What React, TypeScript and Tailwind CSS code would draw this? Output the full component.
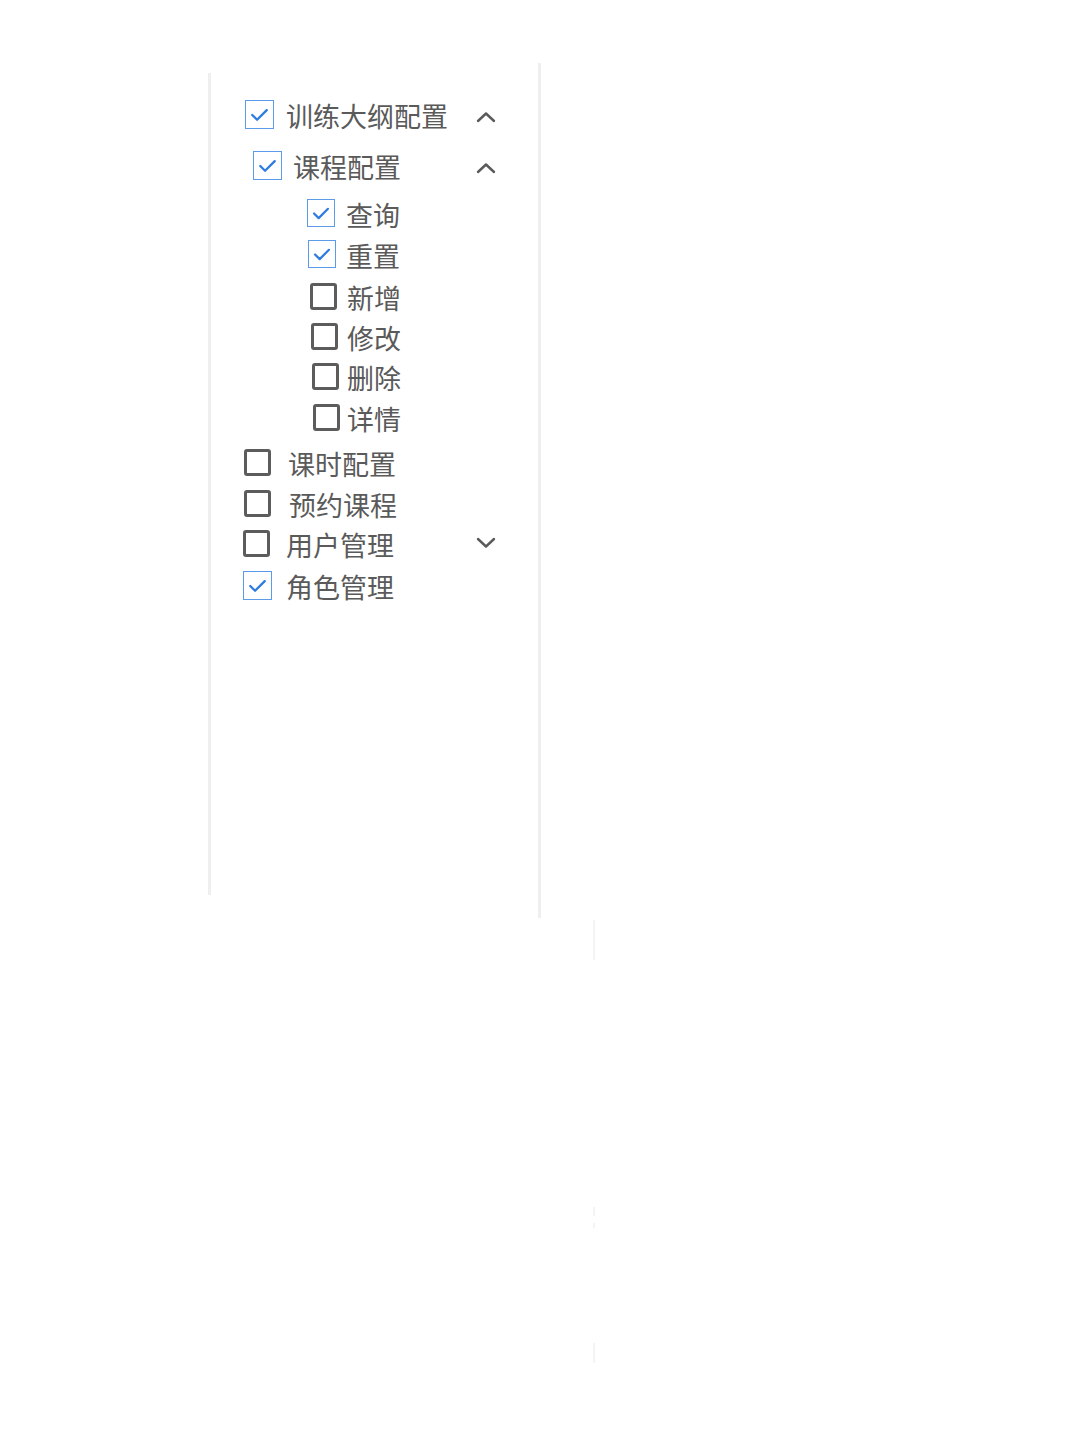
import React from "react";

function Checked({ size = "w-[29px] h-[29px]" }: { size?: string }) {
  return (
    <span className={`${size} shrink-0 border border-[#5b9bea] bg-white flex items-center justify-center`}>
      <svg viewBox="0 0 28 28" className="w-full h-full">
        <path d="M6.5 14.5 L11.5 19.5 L21.5 9.5" fill="none" stroke="#2f7ce0" strokeWidth="2.4" strokeLinecap="round" strokeLinejoin="round" />
      </svg>
    </span>
  );
}

function Unchecked() {
  return <span className="w-[27px] h-[27px] shrink-0 border-[3px] border-[#5c5c5c] rounded-[3px] bg-white" />;
}

function Chevron({ up }: { up: boolean }) {
  return (
    <svg viewBox="0 0 20 12" className={`w-[20px] h-[12px] ml-auto shrink-0 ${up ? "translate-y-[2px]" : ""}`}>
      <path
        d={up ? "M2 10 L10 2.5 L18 10" : "M2 2 L10 9.5 L18 2"}
        fill="none"
        stroke="#5a5a5a"
        strokeWidth="2.4"
        strokeLinecap="round"
        strokeLinejoin="round"
      />
    </svg>
  );
}

const label = "text-[27px] leading-none text-[#5a5a5a] whitespace-nowrap translate-y-[1px]";

export default function App() {
  return (
    <div className="min-h-[1443px] bg-white" style={{ fontFamily: '"Noto Sans CJK SC", "Noto Sans", sans-serif' }}>
      <div className="ml-[208px] pt-[63px]">
        <div className="w-[333px] h-[855px] pt-[10px] border-r-[3px] border-[#efefef]">
          <div className="h-[822px] border-l-[3px] border-[#efefef] pt-[27px] pr-[42px]">
            {/* 训练大纲配置 */}
            <div className="h-[29px] flex items-center pl-[34px]">
              <Checked />
              <span className={`${label} ml-[12px]`}>训练大纲配置</span>
              <Chevron up />
            </div>
            {/* 课程配置 */}
            <div className="h-[29px] mt-[22px] flex items-center pl-[42px]">
              <Checked />
              <span className={`${label} ml-[11px]`}>课程配置</span>
              <Chevron up />
            </div>
            {/* 课程配置 actions */}
            <div className="h-[28px] mt-[19px] flex items-center pl-[96px]">
              <Checked size="w-[28px] h-[28px]" />
              <span className={`${label} ml-[11px]`}>查询</span>
            </div>
            <div className="h-[28px] mt-[13px] flex items-center pl-[97px]">
              <Checked size="w-[28px] h-[28px]" />
              <span className={`${label} ml-[10px]`}>重置</span>
            </div>
            <div className="h-[28px] mt-[14px] flex items-center pl-[99px]">
              <Unchecked />
              <span className={`${label} ml-[10px]`}>新增</span>
            </div>
            <div className="h-[28px] mt-[12px] flex items-center pl-[100px]">
              <Unchecked />
              <span className={`${label} ml-[9px]`}>修改</span>
            </div>
            <div className="h-[28px] mt-[12px] flex items-center pl-[101px]">
              <Unchecked />
              <span className={`${label} ml-[8px]`}>删除</span>
            </div>
            <div className="h-[28px] mt-[13px] flex items-center pl-[102px]">
              <Unchecked />
              <span className={`${label} ml-[7px]`}>详情</span>
            </div>
            {/* top-level menus */}
            <div className="h-[28px] mt-[17px] flex items-center pl-[33px]">
              <Unchecked />
              <span className={`${label} ml-[17px]`}>课时配置</span>
            </div>
            <div className="h-[28px] mt-[13px] flex items-center pl-[33px]">
              <Unchecked />
              <span className={`${label} ml-[18px] text-[#4a4a4a]`}>预约课程</span>
            </div>
            <div className="h-[28px] mt-[12px] flex items-center pl-[32px]">
              <Unchecked />
              <span className={`${label} ml-[16px]`}>用户管理</span>
              <Chevron up={false} />
            </div>
            <div className="h-[29px] mt-[14px] flex items-center pl-[32px]">
              <Checked />
              <span className={`${label} ml-[14px]`}>角色管理</span>
            </div>
          </div>
        </div>
      </div>
      {/* faint divider segments */}
      <div className="ml-[593px] w-[2px]">
        <div className="mt-[2px] h-[40px] bg-[#f4f4f4]" />
        <div className="mt-[247px] h-[9px] bg-[#f4f4f4]" />
        <div className="mt-[7px] h-[5px] bg-[#f4f4f4]" />
        <div className="mt-[115px] h-[20px] bg-[#f4f4f4]" />
      </div>
    </div>
  );
}
